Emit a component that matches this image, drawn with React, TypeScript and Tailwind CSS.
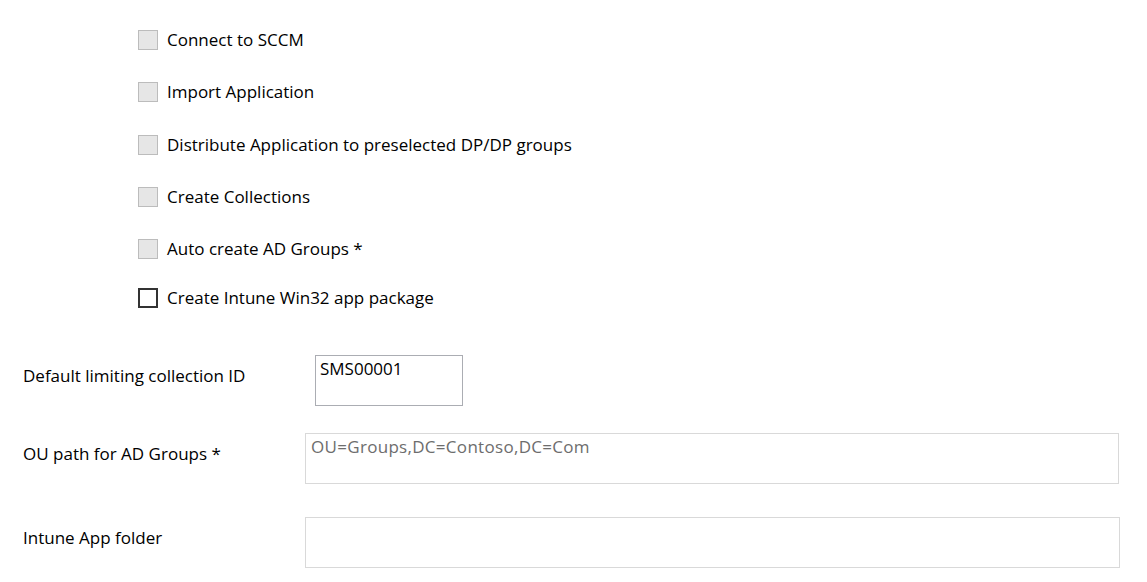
import React from "react";

const font = { fontFamily: '"Open Sans", "Noto Sans", "Liberation Sans", sans-serif' };

function Check({ label, disabled }: { label: string; disabled?: boolean }) {
  return (
    <div className="flex items-center pl-[138px]">
      <div
        className={
          disabled
            ? "w-[20px] h-[20px] border border-[#bcbcbc] bg-[#e6e6e6]"
            : "w-[20px] h-[20px] border-2 border-[#333333] bg-white"
        }
      />
      <span className="ml-[9px] text-[17px] text-[#000] leading-[22px]">{label}</span>
    </div>
  );
}

export default function App() {
  return (
    <div className="w-[1147px] h-[582px] bg-white overflow-hidden" style={font}>
      <div className="pt-[14px] flex flex-col">
        <div className="h-[52px] flex items-center"><Check label="Connect to SCCM" disabled /></div>
        <div className="h-[52px] flex items-center"><Check label="Import Application" disabled /></div>
        <div className="h-[53px] flex items-center"><Check label="Distribute Application to preselected DP/DP groups" disabled /></div>
        <div className="h-[52px] flex items-center"><Check label="Create Collections" disabled /></div>
        <div className="h-[52px] flex items-center"><Check label="Auto create AD Groups *" disabled /></div>
        <div className="h-[46px] flex items-center"><Check label="Create Intune Win32 app package" /></div>
      </div>
      <div className="flex flex-col pl-[23px] text-[17px] text-black">
        <div className="flex items-center mt-[34px]">
          <span className="w-[282px] -mt-[9px] leading-[22px]">Default limiting collection ID</span>
          <div className="ml-[10px] w-[148px] h-[51px] border border-[#abadb3] px-[4px] pt-[2px] leading-[22px]">SMS00001</div>
        </div>
        <div className="flex items-center mt-[27px]">
          <span className="w-[282px] -mt-[9px] leading-[22px]">OU path for AD Groups *</span>
          <div className="w-[814px] h-[51px] border border-[#d9d9d9] px-[5px] pt-[2px] leading-[22px] tracking-[0.3px] text-[#6d6d6d]">OU=Groups,DC=Contoso,DC=Com</div>
        </div>
        <div className="flex items-center mt-[33px]">
          <span className="w-[282px] -mt-[9px] leading-[22px]">Intune App folder</span>
          <div className="w-[815px] h-[51px] border border-[#d9d9d9]" />
        </div>
      </div>
    </div>
  );
}
